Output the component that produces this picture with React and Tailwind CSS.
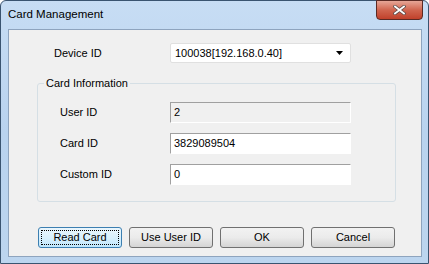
import React from "react";

const font = { fontFamily: '"Liberation Sans", Arial, sans-serif' };

function Field({ label, value, disabled }) {
  return (
    <div className="flex items-center h-[21px]">
      <div className="w-[110px] text-[11px] text-black">{label}</div>
      <div
        className={
          "w-[181px] h-[21px] border-t border-l border-t-[#a0a0a0] border-l-[#a0a0a0] border-b border-r flex items-center pl-[3px] text-[11px] text-black " +
          (disabled ? "bg-[#f0f0f0] border-b-white border-r-white" : "bg-white border-b-white border-r-white")
        }
      >
        {value}
      </div>
    </div>
  );
}

function Btn({ children, def }) {
  return (
    <button
      className={
        "w-[84px] h-[21px] rounded-[3px] border text-[11px] text-black flex items-center justify-center p-[2px] " +
        (def
          ? "border-[#3c7fb1] bg-gradient-to-b from-[#eaf6fd] via-[#d9f0fc] to-[#bee6fd]"
          : "border-[#707070] bg-gradient-to-b from-[#f2f2f2] via-[#ebebeb] to-[#d4d4d4]")
      }
    >
      <span
        className={
          "w-full h-full flex items-center justify-center " +
          (def ? "border border-dotted border-black" : "")
        }
      >
        {children}
      </span>
    </button>
  );
}

export default function App() {
  return (
    <div className="w-[429px] h-[264px] bg-white" style={font}>
      <div className="w-[429px] h-[264px] rounded-t-[6px] border border-[#3a5470] bg-gradient-to-b from-[#c7ddf4] via-[#b9d3ef] to-[#bcd5ef] flex flex-col relative">
        <div className="h-[28px] flex items-center pl-[7px] pb-[1px] text-[11.5px] text-black">
          Card Management
        </div>
        <div className="absolute top-[-1px] left-[375px] w-[47px] h-[20px] rounded-b-[4px] border border-[#5a2a24] bg-gradient-to-b from-[#e6a697] via-[#d0654f] to-[#c0402a] flex items-center justify-center">
          <svg width="13" height="10" viewBox="0 0 13 10">
            <path
              d="M2 1.5 L11 8.5 M11 1.5 L2 8.5"
              stroke="#5a4a48"
              strokeWidth="3.4"
              strokeLinecap="square"
            />
            <path
              d="M2 1.5 L11 8.5 M11 1.5 L2 8.5"
              stroke="#ffffff"
              strokeWidth="1.8"
              strokeLinecap="square"
            />
          </svg>
        </div>
        <div className="ml-[7px] w-[414px] h-[228px] border border-[#8ea4be] bg-[#f0f0f0] flex flex-col">
          <div className="mt-[13px] flex items-center h-[20px] pl-[45px]">
            <div className="w-[116px] text-[11px] text-black">Device ID</div>
            <div className="w-[181px] h-[20px] rounded-[2px] border border-[#e0e0e0] bg-white flex items-center justify-between pl-[4px] pr-[6px] text-[11px] text-black">
              <span>100038[192.168.0.40]</span>
              <svg width="8" height="4" viewBox="0 0 8 4">
                <path d="M0 0 H7 L3.5 4 Z" fill="#000" />
              </svg>
            </div>
          </div>
          <div className="mt-[20px] ml-[28px] w-[359px] h-[119px] rounded-[3px] border border-[#d5dfe5] relative flex flex-col pl-[22px] pt-[18px] gap-[10px]">
            <span className="absolute left-[6px] top-[-8px] px-[2px] bg-[#f0f0f0] text-[11px] text-black leading-[14px]">
              Card Information
            </span>
            <Field label="User ID" value="2" disabled />
            <Field label="Card ID" value="3829089504" />
            <Field label="Custom ID" value="0" />
          </div>
          <div className="mt-[25px] pl-[29px] flex gap-[7px]">
            <Btn def>Read Card</Btn>
            <Btn>Use User ID</Btn>
            <Btn>OK</Btn>
            <Btn>Cancel</Btn>
          </div>
        </div>
      </div>
    </div>
  );
}
